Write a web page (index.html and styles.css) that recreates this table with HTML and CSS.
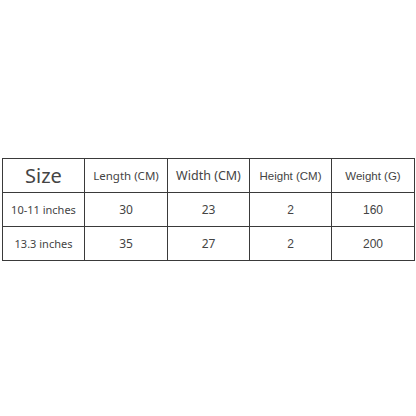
FILE: index.html
```html
<!DOCTYPE html>
<html>
<head>
<meta charset="utf-8">
<link rel="stylesheet" href="styles.css">
</head>
<body>
<div class="page">
  <table class="spec">
    <colgroup>
      <col class="c1"><col class="c2"><col class="c3"><col class="c4"><col class="c5">
    </colgroup>
    <tr class="head">
      <td class="sans size">Size</td>
      <td class="sans len">Length (CM)</td>
      <td class="sans wid">Width (CM)</td>
      <td class="arial hgt">Height (CM)</td>
      <td class="arial wgt">Weight (G)</td>
    </tr>
    <tr>
      <td class="sans lbl">10-11 inches</td>
      <td class="sans num">30</td>
      <td class="sans num">23</td>
      <td class="arial num">2</td>
      <td class="arial num">160</td>
    </tr>
    <tr>
      <td class="sans lbl">13.3 inches</td>
      <td class="sans num">35</td>
      <td class="sans num">27</td>
      <td class="arial num">2</td>
      <td class="arial num">200</td>
    </tr>
  </table>
</div>
</body>
</html>
```
FILE: styles.css
```css
html, body {
  margin: 0;
  padding: 0;
  background: #ffffff;
}
.page {
  width: 416px;
  height: 416px;
  display: flex;
  flex-direction: column;
  padding: 158px 0 0 2px;
  box-sizing: border-box;
}
.spec {
  border-collapse: collapse;
  table-layout: fixed;
  width: 413px;
}
.c1 { width: 82px; }
.c2 { width: 83px; }
.c3 { width: 82px; }
.c4 { width: 82px; }
.c5 { width: 83px; }
.spec td {
  border: 1px solid #3a3a3a;
  height: 33px;
  padding: 0;
  text-align: center;
  vertical-align: middle;
  color: #444;
  white-space: nowrap;
}
.sans {
  font-family: "Noto Sans", "Open Sans", sans-serif;
}
.arial {
  font-family: "Liberation Sans", Arial, sans-serif;
}
.size {
  font-size: 20px;
  color: #333;
}
.len {
  font-size: 11.5px;
  color: #444;
  padding-right: 3px;
}
.wid {
  font-size: 12.5px;
  color: #222;
  padding-right: 6px;
}
.hgt {
  font-size: 11.5px;
  color: #555;
  padding-right: 6px;
}
.wgt {
  font-size: 11.5px;
  color: #333;
  padding-right: 14px;
}
.lbl {
  font-size: 11px;
  color: #555;
}
.num {
  font-size: 12px;
  color: #444;
}
```
